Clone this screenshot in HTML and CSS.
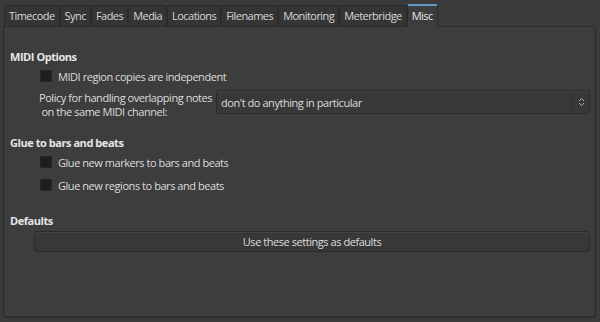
FILE: index.html
```html
<!DOCTYPE html>
<html>
<head>
<meta charset="utf-8">
<link rel="stylesheet" href="styles.css">
</head>
<body>
<div class="window">
  <div class="tabs">
    <div class="tab">Timecode</div>
    <div class="tab">Sync</div>
    <div class="tab">Fades</div>
    <div class="tab">Media</div>
    <div class="tab">Locations</div>
    <div class="tab">Filenames</div>
    <div class="tab">Monitoring</div>
    <div class="tab">Meterbridge</div>
    <div class="tab active">Misc</div>
  </div>
  <div class="panel">
    <div class="heading h-midi">MIDI Options</div>
    <div class="check-row first"><span class="box"></span><span>MIDI region copies are independent</span></div>
    <div class="policy-row">
      <div class="policy-label">Policy for handling overlapping notes<br>&nbsp;on the same MIDI channel:</div>
      <div class="combo">
        <span class="combo-text">don't do anything in particular</span>
        <span class="combo-sep"></span>
        <svg class="combo-arrow" width="7" height="10" viewBox="0 0 7 10"><path d="M1 4 L3.5 1.5 L6 4 M1 6 L3.5 8.5 L6 6" fill="none" stroke="#a8a8a8" stroke-width="1"/></svg>
      </div>
    </div>
    <div class="heading h-glue">Glue to bars and beats</div>
    <div class="check-row first"><span class="box"></span><span>Glue new markers to bars and beats</span></div>
    <div class="check-row"><span class="box"></span><span>Glue new regions to bars and beats</span></div>
    <div class="heading h-def">Defaults</div>
    <div class="button">Use these settings as defaults</div>
  </div>
</div>
</body>
</html>
```

FILE: styles.css
```css
html, body {
  margin: 0;
  padding: 0;
  background: #3b3b3b;
}
body {
  width: 600px;
  height: 322px;
  overflow: hidden;
  font-family: "Open Sans", "Noto Sans", sans-serif;
  font-size: 11px;
  letter-spacing: -0.45px;
  color: #dcdcdc;
}
.window {
  padding: 4px 4px 0 3px;
}
.tabs {
  display: flex;
  padding-left: 1px;
  height: 22px;
  align-items: flex-end;
}
.tab {
  height: 21px;
  box-sizing: border-box;
  padding: 0 4px;
  line-height: 20px;
  background: #353535;
  border: 1px solid #2b2b2b;
  border-bottom: none;
  border-radius: 2px 2px 0 0;
  color: #d6d6d6;
  white-space: nowrap;
  letter-spacing: -0.55px;
}
.tab.active {
  height: 23px;
  background: #3d3d3d;
  border-top: 2px solid #5e9cc6;
  border-color: #2b2b2b;
  border-top-color: #5e9cc6;
  color: #e8e8e8;
  position: relative;
  top: 1px;
}
.panel {
  height: 292px;
  box-sizing: border-box;
  border: 1px solid #2a2a2a;
  border-radius: 0 3px 3px 3px;
  background: #3d3d3d;
  padding: 0 5px 0 6px;
  box-shadow: inset 0 -1px 0 #333;
}
.heading {
  font-weight: bold;
  color: #e6e6e6;
  line-height: 16px;
}
.h-midi { margin-top: 22px; }
.h-glue { margin-top: 16px; }
.h-def { margin-top: 20px; }
.check-row {
  display: flex;
  align-items: center;
  gap: 6px;
  padding-left: 30px;
  height: 16px;
  margin-top: 7px;
  white-space: nowrap;
}
.check-row.first { margin-top: 3px; }
.box {
  width: 12px;
  height: 12px;
  background: #1e1e1e;
  border: 1px solid #262626;
  box-sizing: border-box;
  border-radius: 1px;
}
.policy-row {
  display: flex;
  align-items: flex-start;
  margin-top: 6px;
  padding-left: 29px;
}
.policy-label {
  line-height: 14px;
  width: 177px;
  padding-top: 1px;
  white-space: nowrap;
}
.combo {
  flex: 1;
  height: 24px;
  box-sizing: border-box;
  border: 1px solid #2b2b2b;
  border-radius: 3px;
  background: #383838;
  display: flex;
  align-items: center;
  padding-left: 4px;
  box-shadow: inset 0 1px 0 #434343;
}
.combo-text { flex: 1; }
.combo-sep {
  width: 1px;
  height: 20px;
  background: #303030;
  margin-right: 5px;
}
.combo-arrow { margin-right: 4px; }
.button {
  margin-left: 24px;
  margin-top: 2px;
  height: 21px;
  box-sizing: border-box;
  border: 1px solid #2b2b2b;
  border-radius: 3px;
  background: #383838;
  text-align: center;
  line-height: 19px;
  box-shadow: inset 0 1px 0 #444;
}
```
